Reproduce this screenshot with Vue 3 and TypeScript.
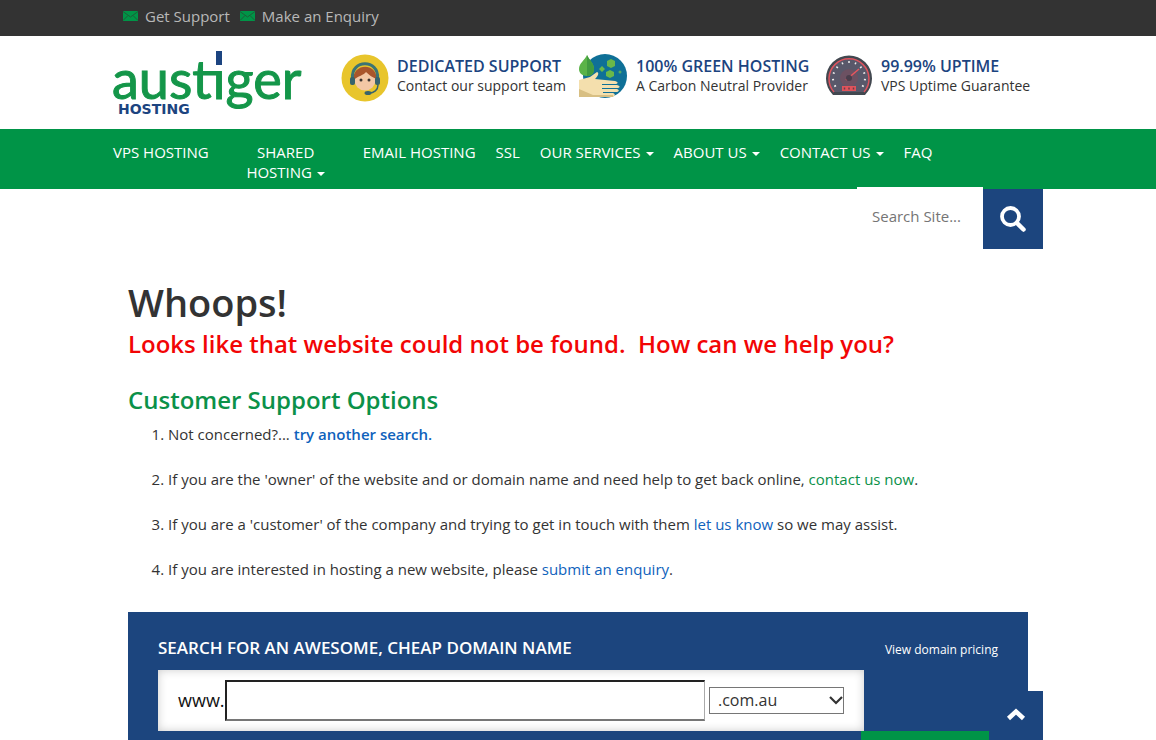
<script setup lang="ts">
import { ref } from 'vue'

interface NavItem {
  label: string
  menu?: boolean
  wrap?: boolean
}

const nav: NavItem[] = [
  { label: 'VPS HOSTING' },
  { label: 'SHARED HOSTING', menu: true, wrap: true },
  { label: 'EMAIL HOSTING' },
  { label: 'SSL' },
  { label: 'OUR SERVICES', menu: true },
  { label: 'ABOUT US', menu: true },
  { label: 'CONTACT US', menu: true },
  { label: 'FAQ' },
]

const topLinks: string[] = ['Get Support', 'Make an Enquiry']
const extensions: string[] = ['.com.au', '.com', '.net.au', '.net', '.org']

const siteQuery = ref('')
const domain = ref('')
const extension = ref('.com.au')

// Gauge tick marks, in degrees around the dial
const ticks: number[] = [-120, -96, -72, -48, -24, 0, 24, 48, 72, 96, 120]
</script>

<template>
  <div class="page">
    <div class="topbar">
      <div class="container top-links">
        <a v-for="label in topLinks" :key="label" href="#">
          <svg width="15" height="10" viewBox="0 0 15 10" aria-hidden="true">
            <rect width="15" height="10" fill="#009447" />
            <path d="M0 0.5L7.5 6L15 0.5M0 9.5L5 4.5M15 9.5L10 4.5" fill="none" stroke="#1d5c38" stroke-width="1" />
          </svg>
          <span>{{ label }}</span>
        </a>
      </div>
    </div>

    <header class="container masthead">
      <a class="logo" href="#" aria-label="Austiger Hosting">
        <svg width="190" height="68" viewBox="0 0 190 68">
          <text class="logo-name" x="-1" y="51">austiger</text>
          <rect x="102" y="3" width="9" height="17" fill="#fff" />
          <rect x="103" y="3" width="6" height="14" fill="#1c4480" />
          <text class="logo-sub" x="5" y="66">HOSTING</text>
        </svg>
      </a>

      <div class="feature support">
        <svg width="48" height="48" viewBox="0 0 48 48" aria-hidden="true">
          <circle cx="24" cy="24" r="23.5" fill="#e8c52c" />
          <ellipse cx="24" cy="26" rx="10.5" ry="10.5" fill="#f3c8a5" />
          <path d="M12.5 26C11 9 36 8 35.5 25C31 23 28 21 25 18C23 21 17 22 12.5 26Z" fill="#a9562c" />
          <path d="M11.5 24C10 5 38 5 36.5 24" fill="none" stroke="#3c7474" stroke-width="3" />
          <rect x="9" y="23" width="5" height="8" rx="2" fill="#37636b" />
          <rect x="34" y="23" width="5" height="8" rx="2" fill="#37636b" />
          <circle cx="20" cy="26" r="1.5" fill="#3a342f" />
          <circle cx="28" cy="26" r="1.5" fill="#3a342f" />
          <path d="M37 31C37 36 33 39 28 39" fill="none" stroke="#37636b" stroke-width="1.5" />
          <ellipse cx="27" cy="39" rx="3.5" ry="2" fill="#37636b" />
        </svg>
        <div>
          <strong>DEDICATED SUPPORT</strong>
          <span>Contact our support team</span>
        </div>
      </div>

      <div class="feature green">
        <svg width="50" height="48" viewBox="0 0 50 48" aria-hidden="true">
          <circle cx="27" cy="22" r="22" fill="#0f7097" />
          <path d="M9 1C11 6 16 9 16 15C16 20 13 22 9 22C4 22 1 19 1 15C1 9 7 6 9 1Z" fill="#5bb348" />
          <path d="M9 1C11 6 16 9 16 15C16 20 13 22 9 22Z" fill="#419b40" />
          <path d="M33 5l4 2v5l-4 2-4-2V7zM32 16l4 2v4l-4 2-4-2v-4zM24 12l3 3-3 3-3-3z" fill="#6ab84a" />
          <circle cx="42" cy="18" r="1.5" fill="#52aa69" />
          <path d="M1 26L12 23L19 18C22 19 19 23 17 25L37 27C41 28 40 30 37 30H24V31H39C43 32 42 34 39 34H24V35H39C42 36 41 38 38 38H25V39H35C38 40 37 43 34 43H1Z" fill="#f4dfad" />
          <path d="M1 35L15 41H35V43H1Z" fill="#d8bf83" />
        </svg>
        <div>
          <strong>100% GREEN HOSTING</strong>
          <span>A Carbon Neutral Provider</span>
        </div>
      </div>

      <div class="feature uptime">
        <svg width="48" height="48" viewBox="0 0 48 48" aria-hidden="true">
          <path d="M8 41A23 23 0 1 1 40 41Z" fill="#424850" />
          <path d="M9 38A20 20 0 1 1 39 38" fill="#59586a" stroke="#dd535e" stroke-width="1.5" />
          <line v-for="t in ticks" :key="t" x1="24" y1="7" x2="24" y2="9" stroke="#f1eeee" stroke-width="1.5" :transform="`rotate(${t} 24 24)`" />
          <circle cx="24" cy="24" r="9" fill="#6c5162" />
          <path d="M21 26L34 15" stroke="#e9565e" stroke-width="1.5" />
          <circle cx="24" cy="24" r="3" fill="#4a3e4c" />
          <rect x="17" y="32" width="14" height="5" fill="#e0535b" />
          <path d="M19.5 33.5v2M24 33.5v2M28.5 33.5v2" stroke="#683f49" stroke-width="1.5" />
        </svg>
        <div>
          <strong>99.99% UPTIME</strong>
          <span>VPS Uptime Guarantee</span>
        </div>
      </div>
    </header>

    <nav class="nav" aria-label="Main">
      <div class="container">
        <ul>
          <li v-for="item in nav" :key="item.label" :class="{ wrap: item.wrap }">
            <a href="#">{{ item.label }}<i v-if="item.menu" class="caret"></i></a>
          </li>
        </ul>
      </div>
    </nav>

    <form class="container site-search" role="search" @submit.prevent>
      <input v-model="siteQuery" type="text" aria-label="Search Site" placeholder="Search Site..." />
      <button type="submit" aria-label="Search">
        <svg width="26" height="26" viewBox="0 0 26 26" aria-hidden="true">
          <circle cx="10.5" cy="10.5" r="8.5" fill="none" stroke="#fff" stroke-width="3.8" />
          <path d="M17 17L23.5 23.5" stroke="#fff" stroke-width="4.5" stroke-linecap="round" />
        </svg>
      </button>
    </form>

    <main class="container content">
      <h1>Whoops!</h1>
      <h2 class="alert">Looks like that website could not be found.&nbsp; How can we help you?</h2>
      <h2 class="options">Customer Support Options</h2>
      <ol>
        <li>Not concerned?... <a class="blue" href="#"><b>try another search.</b></a></li>
        <li>If you are the 'owner' of the website and or domain name and need help to get back online, <a class="leaf" href="#">contact us now</a>.</li>
        <li>If you are a 'customer' of the company and trying to get in touch with them <a class="blue" href="#">let us know</a> so we may assist.</li>
        <li>If you are interested in hosting a new website, please <a class="blue" href="#">submit an enquiry</a>.</li>
      </ol>

      <form class="domain" @submit.prevent>
        <div class="domain-head">
          <h3>SEARCH FOR AN AWESOME, CHEAP DOMAIN NAME</h3>
          <a href="#">View domain pricing</a>
        </div>
        <div class="domain-box">
          <label for="domain">www.</label>
          <input id="domain" v-model="domain" type="text" />
          <div class="select">
            <select v-model="extension" aria-label="Domain extension">
              <option v-for="e in extensions" :key="e">{{ e }}</option>
            </select>
            <svg width="16" height="10" viewBox="0 0 16 10" aria-hidden="true">
              <path d="M2 2L8 8L14 2" fill="none" stroke="#333" stroke-width="2.2" />
            </svg>
          </div>
        </div>
        <button class="domain-go" type="submit" aria-label="Search domains"></button>
      </form>
      <button class="to-top" type="button" aria-label="Back to top">
        <svg width="20" height="14" viewBox="0 0 20 14" aria-hidden="true">
          <path d="M2.5 11.5L10 4.5L17.5 11.5" fill="none" stroke="#fff" stroke-width="4.5" />
        </svg>
      </button>
    </main>
  </div>
</template>

<style>
body {
  margin: 0;
  background: #fff;
}
</style>

<style scoped>
.page {
  height: 100vh;
  overflow: hidden;
  font-family: "Open Sans", "Noto Sans", sans-serif;
  font-size: 15px;
  color: #333;
}
.page * {
  box-sizing: border-box;
}
a {
  text-decoration: none;
}
button,
input,
select {
  font-family: inherit;
  border-radius: 0;
}
.container {
  max-width: 930px;
  margin: 0 auto;
}
.topbar {
  background: #333;
}
.top-links {
  display: flex;
  gap: 10px;
  height: 36px;
  padding: 0 10px 4px;
  align-items: center;
}
.top-links a {
  display: flex;
  align-items: center;
  gap: 7px;
  color: #b8b8b8;
}
.masthead {
  display: flex;
  height: 93px;
  padding-top: 12px;
}
.logo {
  width: 228px;
  flex: none;
}
.logo svg {
  display: block;
  overflow: visible;
}
.logo-name {
  font: 54px Lato, sans-serif;
  fill: #149649;
  stroke: #149649;
  stroke-width: 1px;
}
.logo-sub {
  font: bold 14px "DejaVu Sans", sans-serif;
  fill: #1c4480;
}
.feature {
  display: flex;
  flex: none;
  gap: 8px;
  padding-top: 6px;
  white-space: nowrap;
}
.feature svg {
  flex: none;
}
.support {
  width: 237px;
}
.green {
  width: 247px;
}
.feature strong,
.feature span {
  display: block;
  font-size: 14px;
  line-height: 19px;
}
.feature div {
  padding-top: 3px;
}
.feature strong {
  color: #1c4480;
  font-weight: 600;
  font-size: 16px;
}
.nav {
  background: #009447;
}
.nav ul {
  display: flex;
  list-style: none;
  margin: 0 -10px;
  padding: 0;
  min-height: 60px;
}
.nav li {
  padding: 13px 10px 7px;
  line-height: 20px;
  text-align: center;
  white-space: nowrap;
}
.nav .wrap {
  width: 134px;
  white-space: normal;
}
.nav a {
  color: #fff;
}
.caret {
  display: inline-block;
  margin-left: 5px;
  border: 4px solid transparent;
  border-top-color: #fff;
  border-bottom: 0;
  vertical-align: 2px;
}
.site-search {
  display: flex;
  justify-content: flex-end;
  height: 60px;
}
.site-search input {
  width: 126px;
  height: 62px;
  margin-top: -2px;
  padding: 0 15px 4px;
  border: 0;
  background: #fff;
  color: #333;
  font-size: 15px;
}
.site-search input::placeholder {
  color: #757575;
}
.site-search button {
  width: 60px;
  padding: 0;
  border: 0;
  background: #1c457e;
}
.site-search svg {
  display: block;
  margin: 0 auto;
}
.content {
  position: relative;
  padding: 30px 15px 0;
}
h1 {
  margin: 0;
  font-size: 38px;
  line-height: 47px;
  font-weight: 600;
}
h2 {
  margin: 0;
  font-size: 24px;
  line-height: 36px;
  font-weight: 600;
}
.alert {
  color: #f20505;
}
.options {
  margin-top: 20px;
  color: #0b9149;
}
ol {
  margin: 4px 0 31px;
  padding-left: 40px;
}
ol li {
  line-height: 24px;
}
ol li + li {
  margin-top: 21px;
}
.blue {
  color: #0f62bc;
}
.leaf {
  color: #0b9149;
}
b {
  font-weight: 600;
}
.domain {
  background: #1c457e;
  padding: 22px 30px 30px;
}
.domain-head {
  display: flex;
  justify-content: space-between;
  align-items: flex-start;
  height: 36px;
  line-height: 28px;
}
.domain-head h3 {
  margin: 0;
  color: #fff;
  font-size: 17px;
  font-weight: 600;
}
.domain-head a {
  padding-top: 2px;
  color: #fff;
  font-size: 12px;
}
.domain-box {
  display: flex;
  align-items: center;
  max-width: 706px;
  height: 61px;
  padding: 0 20px;
  background: #fff;
  box-shadow: inset 0 0 10px #ccc;
}
.domain-box label {
  width: 47px;
  padding-bottom: 2px;
  color: #111;
  font-size: 18px;
}
.domain-box input {
  flex: 1;
  min-width: 0;
  height: 41px;
  margin-right: 4px;
  border: 2px solid #222;
  border-color: #222 #aaa #767676 #222;
  border-right-width: 1px;
  background: #fff;
  font-size: 18px;
}
.select {
  position: relative;
  width: 135px;
}
.select select {
  display: block;
  width: 100%;
  height: 27px;
  padding: 0 8px 2px;
  border: 1px solid #767676;
  background: #fff;
  color: #333;
  appearance: none;
  font-size: 16px;
}
.select svg {
  position: absolute;
  right: 0;
  top: 8px;
  pointer-events: none;
}
.domain-go {
  display: block;
  width: 137px;
  height: 50px;
  margin-left: auto;
  padding: 0;
  border: 0;
  background: #009447;
}
.to-top {
  position: fixed;
  right: calc(50% - 465px);
  bottom: -5px;
  width: 54px;
  height: 54px;
  padding: 0 0 8px;
  border: 0;
  background: #1c457e;
}
.to-top svg {
  display: block;
  margin: 0 auto;
}
</style>
